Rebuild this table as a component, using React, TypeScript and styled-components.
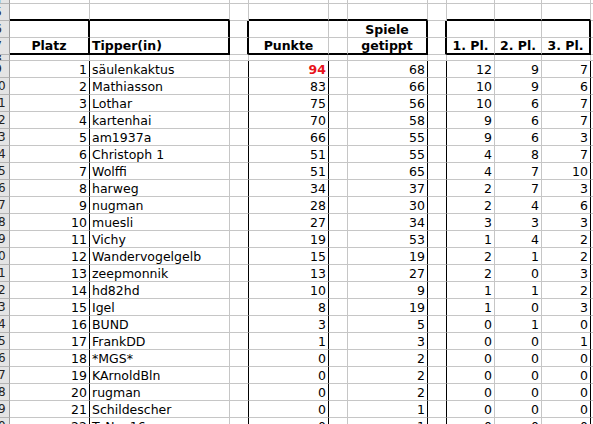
import styled, { createGlobalStyle } from 'styled-components';

type Line = 'grid' | 'black' | 'thick';
type Align = 'left' | 'right' | 'center';

const GlobalStyle = createGlobalStyle`
  html, body {
    margin: 0;
    padding: 0;
    background: #ffffff;
  }
  body {
    font-family: "DejaVu Sans", Verdana, sans-serif;
  }
`;

const lineColor = (l: Line) => (l === 'grid' ? '#c6c6c6' : '#000000');
const lineWidth = (l: Line) => (l === 'thick' ? 2 : 1);

const Sheet = styled.div`
  display: grid;
  grid-template-columns: 10px 80px 140px 19px 80px 19px 80px 19px 48px 47px 49px 64px;
  grid-template-rows: 4px 17px 17px 17px 6px repeat(23, 17px);
  width: 593px;
  height: 424px;
  overflow: hidden;
  font-size: 12.5px;
  color: #000;
`;

const Cell = styled.div<{ $r?: Line; $b?: Line; $align?: Align; $bold?: boolean; $red?: boolean }>`
  box-sizing: border-box;
  display: flex;
  align-items: center;
  justify-content: ${(p) =>
    p.$align === 'right' ? 'flex-end' : p.$align === 'center' ? 'center' : 'flex-start'};
  padding: 0 2px 0 2px;
  border-right: ${(p) => lineWidth(p.$r ?? 'grid')}px solid ${(p) => lineColor(p.$r ?? 'grid')};
  border-bottom: ${(p) => lineWidth(p.$b ?? 'grid')}px solid ${(p) => lineColor(p.$b ?? 'grid')};
  white-space: nowrap;
  overflow: hidden;
  font-weight: ${(p) => (p.$bold || p.$red ? 700 : 400)};
  color: ${(p) => (p.$red ? '#e8141c' : '#000')};
`;

// only the right edge of the row-number column is on screen
const RowHead = styled.div`
  box-sizing: border-box;
  display: flex;
  align-items: center;
  justify-content: flex-end;
  overflow: hidden;
  background: #e4e4e4;
  border-right: 1px solid #9c9c9c;
  border-bottom: 1px solid #b4b4b4;
  font-size: 12px;
  color: #222;

  span {
    flex: none;
    width: 22px;
    text-align: center;
  }
`;

const data: [number, string, number, number, number, number, number][] = [
  [1, 'säulenkaktus', 94, 68, 12, 9, 7],
  [2, 'Mathiasson', 83, 66, 10, 9, 6],
  [3, 'Lothar', 75, 56, 10, 6, 7],
  [4, 'kartenhai', 70, 58, 9, 6, 7],
  [5, 'am1937a', 66, 55, 9, 6, 3],
  [6, 'Christoph 1', 51, 55, 4, 8, 7],
  [7, 'Wolffi', 51, 65, 4, 7, 10],
  [8, 'harweg', 34, 37, 2, 7, 3],
  [9, 'nugman', 28, 30, 2, 4, 6],
  [10, 'muesli', 27, 34, 3, 3, 3],
  [11, 'Vichy', 19, 53, 1, 4, 2],
  [12, 'Wandervogelgelb', 15, 19, 2, 1, 2],
  [13, 'zeepmonnik', 13, 27, 2, 0, 3],
  [14, 'hd82hd', 10, 9, 1, 1, 2],
  [15, 'Igel', 8, 19, 1, 0, 3],
  [16, 'BUND', 3, 5, 0, 1, 0],
  [17, 'FrankDD', 1, 3, 0, 0, 1],
  [18, '*MGS*', 0, 2, 0, 0, 0],
  [19, 'KArnoldBln', 0, 2, 0, 0, 0],
  [20, 'rugman', 0, 2, 0, 0, 0],
  [21, 'Schildescher', 0, 1, 0, 0, 0],
  [22, 'TeNoo16', 0, 1, 0, 0, 0],
];

const Head = ({ n }: { n: number }) => (
  <RowHead>
    <span>{n}</span>
  </RowHead>
);

export default function App() {
  return (
    <>
      <GlobalStyle />
      <Sheet>
        {/* top sliver */}
        <Head n={4} />
        {Array.from({ length: 11 }, (_, i) => (
          <Cell key={`t${i}`} />
        ))}

        {/* row above the header boxes: its bottom line is the top of each box */}
        <Head n={5} />
        <Cell $b="thick" />
        <Cell $b="thick" />
        <Cell />
        <Cell $b="thick" />
        <Cell $b="thick" />
        <Cell $b="thick" />
        <Cell />
        <Cell $b="thick" />
        <Cell $b="thick" />
        <Cell $b="thick" />
        <Cell />

        <Head n={6} />
        <Cell $r="thick" />
        <Cell $r="thick" />
        <Cell $r="thick" />
        <Cell />
        <Cell />
        <Cell $r="thick" $align="center" $bold>
          Spiele
        </Cell>
        <Cell $r="thick" />
        <Cell />
        <Cell />
        <Cell $r="thick" />
        <Cell />

        <Head n={7} />
        <Cell $r="thick" $b="thick" $align="center" $bold>
          Platz
        </Cell>
        <Cell $r="thick" $b="thick" $bold>
          Tipper(in)
        </Cell>
        <Cell $r="thick" />
        <Cell $b="thick" $align="center" $bold>
          Punkte
        </Cell>
        <Cell $b="thick" />
        <Cell $r="thick" $b="thick" $align="center" $bold>
          getippt
        </Cell>
        <Cell $r="thick" />
        <Cell $b="thick" $align="center" $bold>
          1. Pl.
        </Cell>
        <Cell $b="thick" $align="center" $bold>
          2. Pl.
        </Cell>
        <Cell $r="thick" $b="thick" $align="center" $bold>
          3. Pl.
        </Cell>
        <Cell />

        <Head n={8} />
        {Array.from({ length: 11 }, (_, i) => (
          <Cell key={`s${i}`} />
        ))}

        {data.map(([platz, name, punkte, spiele, p1, p2, p3]) => (
          <Row key={platz} platz={platz} name={name} punkte={punkte} spiele={spiele} p1={p1} p2={p2} p3={p3} />
        ))}
      </Sheet>
    </>
  );
}

type RowProps = {
  platz: number;
  name: string;
  punkte: number;
  spiele: number;
  p1: number;
  p2: number;
  p3: number;
};

const Row = ({ platz, name, punkte, spiele, p1, p2, p3 }: RowProps) => (
  <>
    <Head n={platz + 8} />
    <Cell $r="black" $align="right">
      {platz}
    </Cell>
    <Cell>{name}</Cell>
    <Cell $r="black" />
    <Cell $r="black" $align="right" $red={platz === 1}>
      {punkte}
    </Cell>
    <Cell />
    <Cell $r="black" $align="right">
      {spiele}
    </Cell>
    <Cell $r="black" />
    <Cell $align="right">{p1}</Cell>
    <Cell $align="right">{p2}</Cell>
    <Cell $r="black" $align="right">
      {p3}
    </Cell>
    <Cell />
  </>
);
